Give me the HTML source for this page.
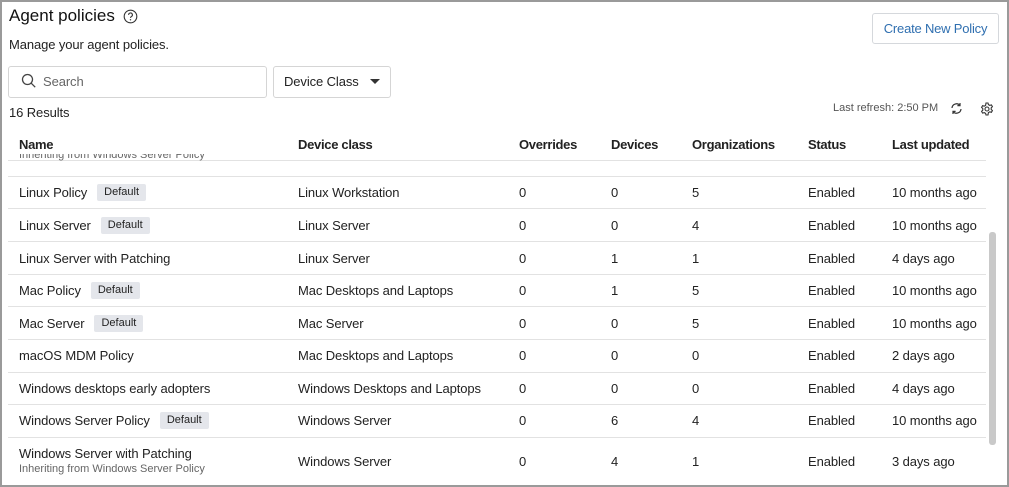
<!DOCTYPE html><html><head><style>
body{margin:0;width:1009px;height:487px;overflow:hidden;background:#fff;font-family:"Liberation Sans",sans-serif;color:#222;position:relative}
.frame{position:absolute;left:0;top:0;width:1005px;height:483px;border:2px solid #9a9a9a}
.a{position:absolute;white-space:nowrap}
.t{font-size:13px;line-height:15px;letter-spacing:-0.1px}
.h{font-size:13px;font-weight:bold;color:#222;letter-spacing:-0.3px}
.line{position:absolute;left:8px;width:978px;height:1px;background:#e2e2e2}
.badge{display:inline-block;background:#e4e6eb;font-size:11px;line-height:13px;padding:2px 7px;margin-left:10px;border-radius:2px;vertical-align:top;margin-top:-1px;letter-spacing:0}
.sub{font-size:11px;color:#666}
</style></head><body>
<div class="frame"></div>
<div class="a" style="left:9px;top:6px;font-size:17px;color:#111">Agent policies</div>
<svg class="a" style="left:123px;top:9px" width="15" height="15" viewBox="0 0 15 15"><circle cx="7.5" cy="7.5" r="6.3" fill="none" stroke="#333" stroke-width="1.1"/><path d="M5.6 5.9a1.9 1.9 0 1 1 2.7 1.7c-.6.3-.8.6-.8 1.3" fill="none" stroke="#333" stroke-width="1.1"/><circle cx="7.5" cy="10.8" r=".7" fill="#333"/></svg>
<div class="a t" style="left:9px;top:37px">Manage your agent policies.</div>
<div class="a" style="left:872px;top:13px;width:125px;height:29px;border:1px solid #d5d8dc;border-radius:3px;color:#2f6fb0;font-size:13px;line-height:29px;text-align:center;letter-spacing:-0.2px">Create New Policy</div>
<div class="a" style="left:8px;top:66px;width:257px;height:30px;border:1px solid #d5d5d5;border-radius:3px"></div>
<svg class="a" style="left:21px;top:73px" width="16" height="16" viewBox="0 0 16 16"><circle cx="6.5" cy="6.5" r="5" fill="none" stroke="#444" stroke-width="1.3"/><path d="M10.2 10.2l4 4" stroke="#444" stroke-width="1.3"/></svg>
<div class="a t" style="left:43px;top:74px;color:#666">Search</div>
<div class="a" style="left:273px;top:66px;width:116px;height:30px;border:1px solid #d5d5d5;border-radius:3px"></div>
<div class="a t" style="left:284px;top:74px">Device Class</div>
<svg class="a" style="left:370px;top:79px" width="10" height="6"><path d="M0 0h10L5 5z" fill="#333"/></svg>
<div class="a t" style="left:9px;top:105px">16 Results</div>
<div class="a" style="left:833px;top:102px;font-size:11px;color:#555">Last refresh: 2:50 PM</div>
<svg class="a" style="left:950px;top:102px" width="13" height="13" viewBox="0 0 13 13" fill="none" stroke="#333" stroke-width="1.2"><path d="M2 6a4.5 4.5 0 0 1 8-2.5M11 7a4.5 4.5 0 0 1-8 2.5"/><path d="M10 1v2.6H7.4M3 12V9.4h2.6"/></svg>
<svg class="a" style="left:980px;top:102px" width="14" height="14" viewBox="0 0 14 14" fill="none" stroke="#333" stroke-width="1.1"><circle cx="7" cy="7" r="2"/><path d="M6 1h2l.4 1.6 1.4.8 1.6-.5 1 1.7-1.2 1.2v1.6l1.2 1.2-1 1.7-1.6-.5-1.4.8L8 13H6l-.4-1.6-1.4-.8-1.6.5-1-1.7 1.2-1.2V6.6L1.6 5.4l1-1.7 1.6.5 1.4-.8z"/></svg>
<div class="a h" style="left:19px;top:137px">Name</div>
<div class="a h" style="left:298px;top:137px">Device class</div>
<div class="a h" style="left:519px;top:137px">Overrides</div>
<div class="a h" style="left:611px;top:137px">Devices</div>
<div class="a h" style="left:692px;top:137px">Organizations</div>
<div class="a h" style="left:808px;top:137px">Status</div>
<div class="a h" style="left:892px;top:137px">Last updated</div>
<div class="line" style="top:160px"></div>
<div class="a sub" style="left:19px;top:154px;height:8px;overflow:hidden;line-height:2px">Inheriting from Windows Server Policy</div>
<div class="line" style="top:176px"></div>
<div class="line" style="top:208px"></div>
<div class="line" style="top:241px"></div>
<div class="line" style="top:274px"></div>
<div class="line" style="top:306px"></div>
<div class="line" style="top:339px"></div>
<div class="line" style="top:372px"></div>
<div class="line" style="top:404px"></div>
<div class="line" style="top:437px"></div>
<div style="position:absolute;left:989px;top:232px;width:7px;height:213px;background:#c9c9c9;border-radius:3px"></div>

<div class="a t" style="left:19px;top:185px">Linux Policy<span class="badge">Default</span></div>
<div class="a t" style="left:298px;top:185px">Linux Workstation</div>
<div class="a t" style="left:519px;top:185px">0</div><div class="a t" style="left:611px;top:185px">0</div><div class="a t" style="left:692px;top:185px">5</div><div class="a t" style="left:808px;top:185px">Enabled</div><div class="a t" style="left:892px;top:185px">10 months ago</div>

<div class="a t" style="left:19px;top:218px">Linux Server<span class="badge">Default</span></div>
<div class="a t" style="left:298px;top:218px">Linux Server</div>
<div class="a t" style="left:519px;top:218px">0</div><div class="a t" style="left:611px;top:218px">0</div><div class="a t" style="left:692px;top:218px">4</div><div class="a t" style="left:808px;top:218px">Enabled</div><div class="a t" style="left:892px;top:218px">10 months ago</div>

<div class="a t" style="left:19px;top:251px">Linux Server with Patching</div>
<div class="a t" style="left:298px;top:251px">Linux Server</div>
<div class="a t" style="left:519px;top:251px">0</div><div class="a t" style="left:611px;top:251px">1</div><div class="a t" style="left:692px;top:251px">1</div><div class="a t" style="left:808px;top:251px">Enabled</div><div class="a t" style="left:892px;top:251px">4 days ago</div>

<div class="a t" style="left:19px;top:283px">Mac Policy<span class="badge">Default</span></div>
<div class="a t" style="left:298px;top:283px">Mac Desktops and Laptops</div>
<div class="a t" style="left:519px;top:283px">0</div><div class="a t" style="left:611px;top:283px">1</div><div class="a t" style="left:692px;top:283px">5</div><div class="a t" style="left:808px;top:283px">Enabled</div><div class="a t" style="left:892px;top:283px">10 months ago</div>

<div class="a t" style="left:19px;top:316px">Mac Server<span class="badge">Default</span></div>
<div class="a t" style="left:298px;top:316px">Mac Server</div>
<div class="a t" style="left:519px;top:316px">0</div><div class="a t" style="left:611px;top:316px">0</div><div class="a t" style="left:692px;top:316px">5</div><div class="a t" style="left:808px;top:316px">Enabled</div><div class="a t" style="left:892px;top:316px">10 months ago</div>

<div class="a t" style="left:19px;top:348px">macOS MDM Policy</div>
<div class="a t" style="left:298px;top:348px">Mac Desktops and Laptops</div>
<div class="a t" style="left:519px;top:348px">0</div><div class="a t" style="left:611px;top:348px">0</div><div class="a t" style="left:692px;top:348px">0</div><div class="a t" style="left:808px;top:348px">Enabled</div><div class="a t" style="left:892px;top:348px">2 days ago</div>

<div class="a t" style="left:19px;top:381px">Windows desktops early adopters</div>
<div class="a t" style="left:298px;top:381px">Windows Desktops and Laptops</div>
<div class="a t" style="left:519px;top:381px">0</div><div class="a t" style="left:611px;top:381px">0</div><div class="a t" style="left:692px;top:381px">0</div><div class="a t" style="left:808px;top:381px">Enabled</div><div class="a t" style="left:892px;top:381px">4 days ago</div>

<div class="a t" style="left:19px;top:413px">Windows Server Policy<span class="badge">Default</span></div>
<div class="a t" style="left:298px;top:413px">Windows Server</div>
<div class="a t" style="left:519px;top:413px">0</div><div class="a t" style="left:611px;top:413px">6</div><div class="a t" style="left:692px;top:413px">4</div><div class="a t" style="left:808px;top:413px">Enabled</div><div class="a t" style="left:892px;top:413px">10 months ago</div>

<div class="a t" style="left:19px;top:446px">Windows Server with Patching</div>
<div class="a sub" style="left:19px;top:463px">Inheriting from Windows Server Policy</div>
<div class="a t" style="left:298px;top:454px">Windows Server</div>
<div class="a t" style="left:519px;top:454px">0</div><div class="a t" style="left:611px;top:454px">4</div><div class="a t" style="left:692px;top:454px">1</div><div class="a t" style="left:808px;top:454px">Enabled</div><div class="a t" style="left:892px;top:454px">3 days ago</div>
</body></html>
